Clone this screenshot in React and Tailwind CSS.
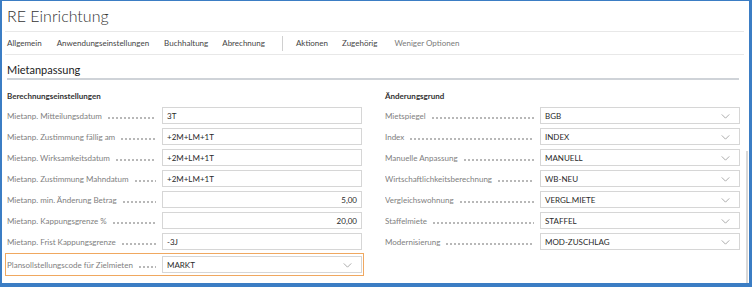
import React from "react";

const Chevron = () => (
  <svg width="9" height="5" viewBox="0 0 10 6" className="absolute right-[9px] top-[6px]">
    <path d="M0.5 0.5 L5 5 L9.5 0.5" fill="none" stroke="#9a9a9a" strokeWidth="1" />
  </svg>
);

const Row = ({ label, value, align = "left", select = false }) => (
  <div className="flex items-center h-[21px]">
    <div className="w-[150px] flex items-center overflow-hidden whitespace-nowrap text-[8px] text-[#808080]">
      <span className="shrink-0">{label}</span>
      <span className="ml-[5px] mr-[1px] flex-1 h-[2px] translate-y-[2px] bg-[radial-gradient(circle,#b8b8b8_45%,transparent_55%)] bg-[length:4px_2px] bg-repeat-x" />
    </div>
    <div className="relative ml-[5px] flex-1 h-[17px] border border-[#d6d6d6] bg-white flex items-center px-[4px] text-[8px] text-[#2a2a2a]">
      <span className={align === "right" ? "ml-auto" : ""}>{value}</span>
      {select && <Chevron />}
    </div>
  </div>
);

export default function App() {
  const left = [
    ["Mietanp. Mitteilungsdatum", "3T"],
    ["Mietanp. Zustimmung fällig am", "+2M+LM+1T"],
    ["Mietanp. Wirksamkeitsdatum", "+2M+LM+1T"],
    ["Mietanp. Zustimmung Mahndatum", "+2M+LM+1T"],
    ["Mietanp. min. Änderung Betrag", "5,00", "right"],
    ["Mietanp. Kappungsgrenze %", "20,00", "right"],
    ["Mietanp. Frist Kappungsgrenze", "-3J"],
  ];
  const right = [
    ["Mietspiegel", "BGB"],
    ["Index", "INDEX"],
    ["Manuelle Anpassung", "MANUELL"],
    ["Wirtschaftlichkeitsberechnung", "WB-NEU"],
    ["Vergleichswohnung", "VERGL.MIETE"],
    ["Staffelmiete", "STAFFEL"],
    ["Modernisierung", "MOD-ZUSCHLAG"],
  ];
  return (
    <div
      className="w-[752px] h-[287px] bg-white border-[#3b7dc4] border-t-[1px] border-l-[2px] border-r-[3px] border-b-[4px] relative overflow-hidden"
      style={{ fontFamily: 'Lato, "Open Sans", sans-serif' }}
    >
      <div className="absolute right-[1px] top-[150px] bottom-0 w-[2px] bg-[#d8d8d8]" />
      <div className="pr-[5px]">
        <div className="h-[30px] pl-[5px] pt-[1px] text-[16px] font-light text-[#333] leading-[28px]">
          RE Einrichtung
        </div>
        <div className="ml-[3px] h-px bg-[#e8e8e8]" />
        <div className="h-[22px] flex items-center pl-[5px] text-[8px] text-[#444]">
          <span className="mr-[15px]">Allgemein</span>
          <span className="mr-[15px]">Anwendungseinstellungen</span>
          <span className="mr-[14px]">Buchhaltung</span>
          <span>Abrechnung</span>
          <span className="w-px h-[15px] bg-[#d0d0d0] ml-[17px] mr-[13px]" />
          <span className="mr-[14px]">Aktionen</span>
          <span className="mr-[17px]">Zugehörig</span>
          <span className="text-[#7a7a7a]">Weniger Optionen</span>
        </div>
        <div className="ml-[3px] h-px bg-[#e8e8e8]" />
        <div className="ml-[5px] mr-[5px] h-[23px] flex items-end text-[11px] leading-[16px] text-[#222]">
          Mietanpassung
        </div>
        <div className="ml-[5px] mr-[5px] h-[2px] bg-[#cfd3d8]" />
        <div className="flex pl-[5px] pt-[8px]">
          <div className="w-[355px]">
            <div className="h-[17px] text-[8px] font-bold text-[#333] leading-[17px]">Berechnungseinstellungen</div>
            {left.map(([l, v, a]) => (
              <Row key={l} label={l} value={v} align={a} />
            ))}
            <div className="mt-[1px] -ml-[2px] -mr-[2px] p-px bg-[#f0a860]">
              <div className="bg-white px-px">
                <Row label="Plansollstellungscode für Zielmieten" value="MARKT" select />
              </div>
            </div>
          </div>
          <div className="w-[355px] ml-[23px]">
            <div className="h-[17px] text-[8px] font-bold text-[#333] leading-[17px]">Änderungsgrund</div>
            {right.map(([l, v]) => (
              <Row key={l} label={l} value={v} select />
            ))}
          </div>
        </div>
      </div>
    </div>
  );
}
